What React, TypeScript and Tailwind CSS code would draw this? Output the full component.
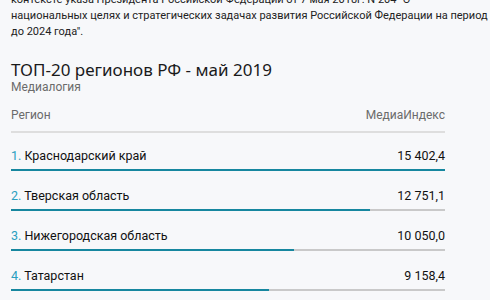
import React from "react";

const rows = [
  { n: 1, name: "Краснодарский край", value: 15402.4, label: "15 402,4" },
  { n: 2, name: "Тверская область", value: 12751.1, label: "12 751,1" },
  { n: 3, name: "Нижегородская область", value: 10050.0, label: "10 050,0" },
  { n: 4, name: "Татарстан", value: 9158.4, label: "9 158,4" },
];

export default function App() {
  const max = 15402.4;
  return (
    <div className="w-[490px] h-[300px] overflow-hidden bg-[#f7f8fa] text-[#222] font-['Roboto',sans-serif]">
      <div className="px-[11px] w-[456px]">
        <p className="mt-[-8px] text-[11px] leading-4 text-[#222] whitespace-nowrap">
          контексте указа Президента Российской Федерации от 7 мая 2018г. N 204 "О
          <br />
          национальных целях и стратегических задачах развития Российской Федерации на период
          <br />
          до 2024 года".
        </p>
        <h2 className="mt-[21px] text-[17px] leading-[18px] text-[#1a1a1a] font-['Noto_Sans',sans-serif]">
          ТОП-20 регионов РФ - май 2019
        </h2>
        <div className="text-[12px] leading-4 text-[#6b6b6b]">Медиалогия</div>
        <div className="mt-[12px] flex justify-between border-b-2 border-[#dedede] pb-[8px] text-[12px] leading-4 text-[#6b6b6b]">
          <span>Регион</span>
          <span>МедиаИндекс</span>
        </div>
        <div className="mt-[15px] flex flex-col gap-[17px]">
          {rows.map((r) => (
            <div key={r.n} className="flex flex-col">
              <div className="flex justify-between text-[12.5px] leading-4 text-[#111]">
                <span>
                  <span className="text-[#2a9fc0]">{r.n}.</span> {r.name}
                </span>
                <span>{r.label}</span>
              </div>
              <div className="mt-[5px] h-[2px] bg-[#c9c9c9]">
                <div className="h-full bg-[#16879f]" style={{ width: `${(r.value / max) * 100}%` }} />
              </div>
            </div>
          ))}
        </div>
      </div>
    </div>
  );
}
